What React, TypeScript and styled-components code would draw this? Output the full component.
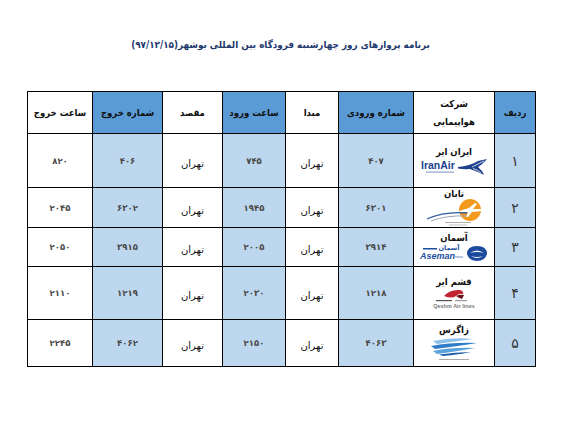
import styled, { createGlobalStyle } from "styled-components";

const GlobalStyle = createGlobalStyle`
  body {
    margin: 0;
    background: #ffffff;
    font-family: "DejaVu Sans", "Liberation Sans", sans-serif;
  }
`;

const Page = styled.div`
  width: 561px;
  height: 421px;
  padding-top: 37px;
  box-sizing: border-box;
  background: #ffffff;
`;

const Title = styled.h1`
  margin: 0;
  text-align: center;
  font-family: "DejaVu Sans Condensed", "DejaVu Sans", sans-serif;
  font-size: 9.8px;
  line-height: 16px;
  font-weight: bold;
  color: #1f3a6e;
  direction: rtl;
`;

const TableWrap = styled.div`
  padding: 38px 0 0 27px;
`;

const Table = styled.table`
  direction: rtl;
  border-collapse: collapse;
  table-layout: fixed;
  width: 508px;
`;

const Col = styled.col<{ $w: number }>`
  width: ${(p) => p.$w}px;
`;

const HeadRow = styled.tr`
  height: 42px;
`;

const BodyRow = styled.tr<{ $h: number }>`
  height: ${(p) => p.$h}px;
`;

const HeadCell = styled.th<{ $shade: boolean }>`
  border: 1px solid #000;
  background: ${(p) => (p.$shade ? "#5b9bd5" : "#ffffff")};
  font-family: "DejaVu Sans Condensed", "DejaVu Sans", sans-serif;
  font-size: 9.5px;
  font-weight: bold;
  line-height: 18px;
  color: #111;
  text-align: center;
  padding: 0 2px;
  white-space: nowrap;
`;

const Cell = styled.td<{ $shade: boolean }>`
  border: 1px solid #000;
  background: ${(p) => (p.$shade ? "#bdd7ee" : "#ffffff")};
  font-size: 8.5px;
  font-weight: bold;
  color: #4a4a4a;
  text-align: center;
  vertical-align: middle;
  padding: 0;
`;

const CityCell = styled(Cell)`
  font-size: 10px;
  font-weight: normal;
  color: #111;
  padding-top: 5px;
`;

const IndexCell = styled(Cell)`
  font-size: 14px;
  font-weight: normal;
  color: #333;
`;

const AirlineCell = styled(Cell)`
  padding: 0;
`;

const AirlineName = styled.div`
  font-family: "DejaVu Sans Condensed", "DejaVu Sans", sans-serif;
  font-size: 9.5px;
  font-weight: bold;
  color: #111;
  line-height: 11px;
`;

const Logo = styled.svg`
  display: block;
  margin: 0 auto;
  direction: ltr;
`;

function IranAirLogo() {
  return (
    <Logo width="68" height="19" viewBox="0 0 68 19">
      <text x="1" y="12" fontSize="10.5" fontWeight="bold" fill="#1d3f8e" fontFamily="Liberation Sans, sans-serif">
        IranAir
      </text>
      <rect x="6" y="14.5" width="28" height="1.2" fill="#8ea4c8" />
      <path d="M38 10 Q50 9 58 4 L67 2 Q63 7 58 10 Q62 13 64 18 Q56 14 50 12 Q44 12.5 38 11.5 Z" fill="#1d3f8e" />
      <path d="M52 10 Q58 7 64 4" stroke="#ffffff" strokeWidth="0.8" fill="none" />
      <path d="M53 11.5 Q58 13 61 16" stroke="#ffffff" strokeWidth="0.8" fill="none" />
    </Logo>
  );
}

function TabanLogo() {
  return (
    <Logo width="62" height="28" viewBox="0 0 62 28">
      <circle cx="47" cy="11" r="11" fill="#f39a1e" />
      <path d="M30 14 L46 9 L52 4 L54 5 L50 10 L58 10 L59 12 L49 13 L45 18 L43 18 L45 13 Z" fill="#ffffff" />
      <path d="M4 20 Q22 12 44 14" stroke="#2f5aa0" strokeWidth="1.3" fill="none" />
      <path d="M8 22 Q24 16 44 17" stroke="#9aa5b5" strokeWidth="1" fill="none" />
      <rect x="22" y="23" width="26" height="1" fill="#b0b0b0" />
      <rect x="26" y="25.5" width="18" height="1" fill="#c0c0c0" />
    </Logo>
  );
}

function AsemanLogo() {
  return (
    <Logo width="70" height="19" viewBox="0 0 70 19">
      <text x="30" y="7" fontSize="6.5" fontWeight="bold" fill="#1d4fa0" textAnchor="middle" fontFamily="DejaVu Sans, sans-serif">
        آسمان
      </text>
      <rect x="4" y="5" width="14" height="1.5" fill="#1d4fa0" />
      <text x="1" y="16" fontSize="9" fontWeight="bold" fontStyle="italic" fill="#1d4fa0" fontFamily="Liberation Sans, sans-serif">
        Aseman
      </text>
      <rect x="36" y="13.5" width="8" height="1" fill="#6f8fc4" />
      <path d="M48 11 Q48 3 58 3 Q68 3 68 11 Q66 18 58 18 Q50 18 48 11 Z" fill="#1b4a9c" />
      <path d="M51 10 Q58 5 65 10 Q58 8 51 10 Z" fill="#ffffff" />
      <path d="M52 13 Q58 17 64 13 Q58 15 52 13 Z" fill="#ffffff" />
    </Logo>
  );
}

function QeshmLogo() {
  return (
    <Logo width="56" height="24" viewBox="0 0 56 24">
      <path d="M18 9 Q24 2 34 3 Q38 4 37 7 Q33 6 30 9 Q26 12 18 9 Z" fill="#c22432" />
      <path d="M30 9 Q34 7 38 8 L36 12 Q33 11 30 9 Z" fill="#6a1018" />
      <rect x="10" y="13" width="16" height="1.2" fill="#555" />
      <rect x="29" y="13" width="12" height="1.2" fill="#999" />
      <text x="28" y="21" fontSize="5.5" fill="#7a7a7a" textAnchor="middle" fontFamily="Liberation Sans, sans-serif">
        Qeshm Air lines
      </text>
    </Logo>
  );
}

function ZagrosLogo() {
  return (
    <Logo width="50" height="28" viewBox="0 0 50 28">
      <path d="M4 6 Q24 2 44 4 Q30 6 8 9 Z" fill="#8fc0ea" />
      <path d="M2 11 Q24 7 48 8 Q30 11 6 14 Z" fill="#2f7cc8" />
      <path d="M4 16 Q24 12 46 13 Q30 16 8 19 Z" fill="#5aa2dc" />
      <path d="M10 19.5 Q26 17 42 17 Q30 19.5 14 21 Z" fill="#1e5ea8" />
      <rect x="10" y="24" width="30" height="1" fill="#a8a8a8" />
    </Logo>
  );
}

const columns = [41, 81, 75, 53, 63, 60, 70, 65];

const headers = [
  "ردیف",
  "شرکت\nهواپیمایی",
  "شماره ورودی",
  "مبدا",
  "ساعت ورود",
  "مقصد",
  "شماره خروج",
  "ساعت خروج",
];

type Flight = {
  idx: string;
  airline: string;
  logo: () => JSX.Element;
  inNo: string;
  inTime: string;
  outNo: string;
  outTime: string;
  h: number;
};

const flights: Flight[] = [
  { idx: "۱", airline: "ایران ایر", logo: IranAirLogo, inNo: "۴۰۷", inTime: "۷۴۵", outNo: "۴۰۶", outTime: "۸۲۰", h: 54 },
  { idx: "۲", airline: "تابان", logo: TabanLogo, inNo: "۶۳۰۱", inTime: "۱۹۴۵", outNo: "۶۳۰۲", outTime: "۲۰۴۵", h: 40 },
  { idx: "۳", airline: "آسمان", logo: AsemanLogo, inNo: "۳۹۱۴", inTime: "۲۰۰۵", outNo: "۳۹۱۵", outTime: "۲۰۵۰", h: 39 },
  { idx: "۴", airline: "قشم ایر", logo: QeshmLogo, inNo: "۱۲۱۸", inTime: "۲۰۳۰", outNo: "۱۲۱۹", outTime: "۲۱۱۰", h: 53 },
  { idx: "۵", airline: "زاگرس", logo: ZagrosLogo, inNo: "۴۰۶۳", inTime: "۲۱۵۰", outNo: "۴۰۶۲", outTime: "۲۲۴۵", h: 47 },
];

export default function App() {
  return (
    <Page>
      <GlobalStyle />
      <Title>برنامه پروازهای روز چهارشنبه فرودگاه بین المللی بوشهر(۹۷/۱۲/۱۵)</Title>
      <TableWrap>
        <Table>
          <colgroup>
            {columns.map((w, i) => (
              <Col key={i} $w={w} />
            ))}
          </colgroup>
          <thead>
            <HeadRow>
              {headers.map((h, i) => (
                <HeadCell key={i} $shade={i % 2 === 0}>
                  {h.split("\n").map((line) => (
                    <div key={line}>{line}</div>
                  ))}
                </HeadCell>
              ))}
            </HeadRow>
          </thead>
          <tbody>
            {flights.map((f) => {
              const LogoMark = f.logo;
              return (
                <BodyRow key={f.idx} $h={f.h}>
                  <IndexCell $shade>{f.idx}</IndexCell>
                  <AirlineCell $shade={false}>
                    <AirlineName>{f.airline}</AirlineName>
                    <LogoMark />
                  </AirlineCell>
                  <Cell $shade>{f.inNo}</Cell>
                  <CityCell $shade={false}>تهران</CityCell>
                  <Cell $shade>{f.inTime}</Cell>
                  <CityCell $shade={false}>تهران</CityCell>
                  <Cell $shade>{f.outNo}</Cell>
                  <Cell $shade={false}>{f.outTime}</Cell>
                </BodyRow>
              );
            })}
          </tbody>
        </Table>
      </TableWrap>
    </Page>
  );
}
